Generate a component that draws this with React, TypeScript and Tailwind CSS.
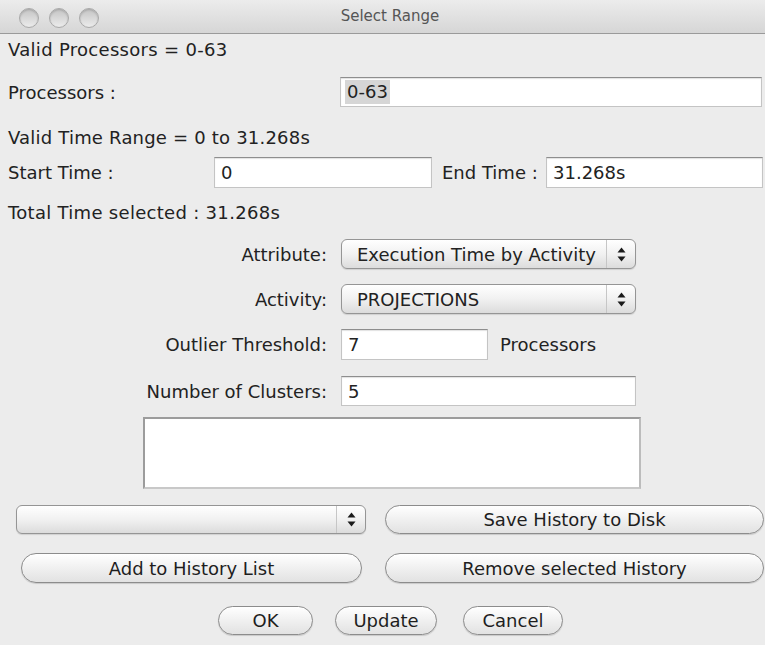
import { ReactNode } from "react";

// Aqua-ish text field: darker top edge, light sides, white fill
function Field({ value, className = "", selected = false }: { value: string; className?: string; selected?: boolean }) {
  return (
    <div
      className={`flex items-center bg-white border border-[#c4c4c4] border-t-[#8e8e8e] shadow-[inset_0_1px_1px_rgba(0,0,0,0.12)] pl-[4px] ${className}`}
    >
      {selected ? <span className="bg-[#d6d6d6] px-[2px] leading-[24px]">{value}</span> : <span className="pl-[2px]">{value}</span>}
    </div>
  );
}

function UpDown() {
  return (
    <svg width="9" height="15" viewBox="0 0 9 15">
      <path d="M4.5 0.5 L8.5 5.5 L0.5 5.5 Z" fill="#1a1a1a" />
      <path d="M0.5 9.5 L8.5 9.5 L4.5 14.5 Z" fill="#1a1a1a" />
    </svg>
  );
}

function Combo({ label, className = "" }: { label?: string; className?: string }) {
  return (
    <div
      className={`flex items-stretch rounded-[6px] border border-[#959595] bg-gradient-to-b from-[#ffffff] via-[#f1f1f1] to-[#dcdcdc] shadow-[0_1px_1px_rgba(0,0,0,0.12)] ${className}`}
    >
      <div className="flex-1 flex items-center pl-[15px] whitespace-nowrap overflow-hidden">{label}</div>
      <div className="w-[29px] border-l border-[#c6c6c6] flex items-center justify-center">
        <UpDown />
      </div>
    </div>
  );
}

function Pill({ children, className = "" }: { children: ReactNode; className?: string }) {
  return (
    <button
      className={`flex items-center justify-center rounded-full border border-[#8c8c8c] bg-gradient-to-b from-[#ffffff] via-[#f0f0f0] to-[#e2e2e2] shadow-[0_1px_1px_rgba(0,0,0,0.15)] text-[#1e1e1e] ${className}`}
    >
      {children}
    </button>
  );
}

function Light() {
  return (
    <span className="w-[20px] h-[20px] rounded-full border border-[#a9a9a9] bg-gradient-to-b from-[#c4c4c4] to-[#ececec] shadow-[inset_0_1px_2px_rgba(0,0,0,0.18)]" />
  );
}

export default function App() {
  return (
    <div className="w-[765px] h-[645px] bg-[#ececec] text-[#222] text-[18px] font-['DejaVu_Sans',sans-serif] overflow-hidden">
      {/* title bar */}
      <div className="relative h-[34px] flex items-center bg-gradient-to-b from-[#ececec] to-[#d6d6d6] border-b border-[#9a9a9a]">
        <div className="flex gap-[10px] pl-[19px] pt-[3px]">
          <Light />
          <Light />
          <Light />
        </div>
        <div className="flex-1 text-center text-[15px] text-[#555] -ml-[84px]">Select Range</div>
      </div>

      <div className="pl-[8px]">
        <div className="h-[30px] flex items-center tracking-[0.3px]">Valid Processors = 0-63</div>

        <div className="mt-[13px] h-[30px] flex items-center">
          <div className="w-[332px]">Processors :</div>
          <Field value="0-63" selected className="w-[422px] h-[30px]" />
        </div>

        <div className="mt-[15px] h-[30px] flex items-center tracking-[0.2px]">Valid Time Range = 0 to 31.268s</div>

        <div className="mt-[5px] h-[31px] flex items-center">
          <div className="w-[206px]">Start Time :</div>
          <Field value="0" className="w-[218px] h-[31px]" />
          <div className="w-[114px] pl-[10px]">End Time :</div>
          <Field value="31.268s" className="w-[217px] h-[31px]" />
        </div>

        <div className="mt-[9px] h-[30px] flex items-center tracking-[0.3px]">Total Time selected : 31.268s</div>
      </div>

      {/* analysis options */}
      <div className="mt-[12px] h-[30px] flex items-center">
        <div className="w-[327px] text-right">Attribute:</div>
        <Combo label="Execution Time by Activity" className="ml-[14px] w-[295px] h-[30px]" />
      </div>
      <div className="mt-[15px] h-[30px] flex items-center">
        <div className="w-[327px] text-right">Activity:</div>
        <Combo label="PROJECTIONS" className="ml-[14px] w-[295px] h-[30px]" />
      </div>
      <div className="mt-[15px] h-[31px] flex items-center">
        <div className="w-[327px] text-right">Outlier Threshold:</div>
        <Field value="7" className="ml-[14px] w-[147px] h-[31px]" />
        <div className="ml-[12px]">Processors</div>
      </div>
      <div className="mt-[16px] h-[30px] flex items-center">
        <div className="w-[327px] text-right">Number of Clusters:</div>
        <Field value="5" className="ml-[14px] w-[295px] h-[30px]" />
      </div>

      <div className="mt-[11px] ml-[143px] w-[498px] h-[72px] bg-white border-2 border-[#9c9c9c] border-b-[#c8c8c8] border-r-[#bcbcbc]" />

      {/* history controls */}
      <div className="mt-[16px] flex items-center">
        <Combo className="ml-[16px] w-[350px] h-[29px]" />
        <Pill className="ml-[19px] w-[379px] h-[29px]">Save History to Disk</Pill>
      </div>
      <div className="mt-[19px] flex items-center">
        <Pill className="ml-[21px] w-[341px] h-[30px]">Add to History List</Pill>
        <Pill className="ml-[23px] w-[379px] h-[30px]">Remove selected History</Pill>
      </div>

      <div className="mt-[23px] flex items-center">
        <Pill className="ml-[218px] w-[95px] h-[29px]">OK</Pill>
        <Pill className="ml-[22px] w-[102px] h-[29px]">Update</Pill>
        <Pill className="ml-[26px] w-[100px] h-[29px]">Cancel</Pill>
      </div>
    </div>
  );
}
